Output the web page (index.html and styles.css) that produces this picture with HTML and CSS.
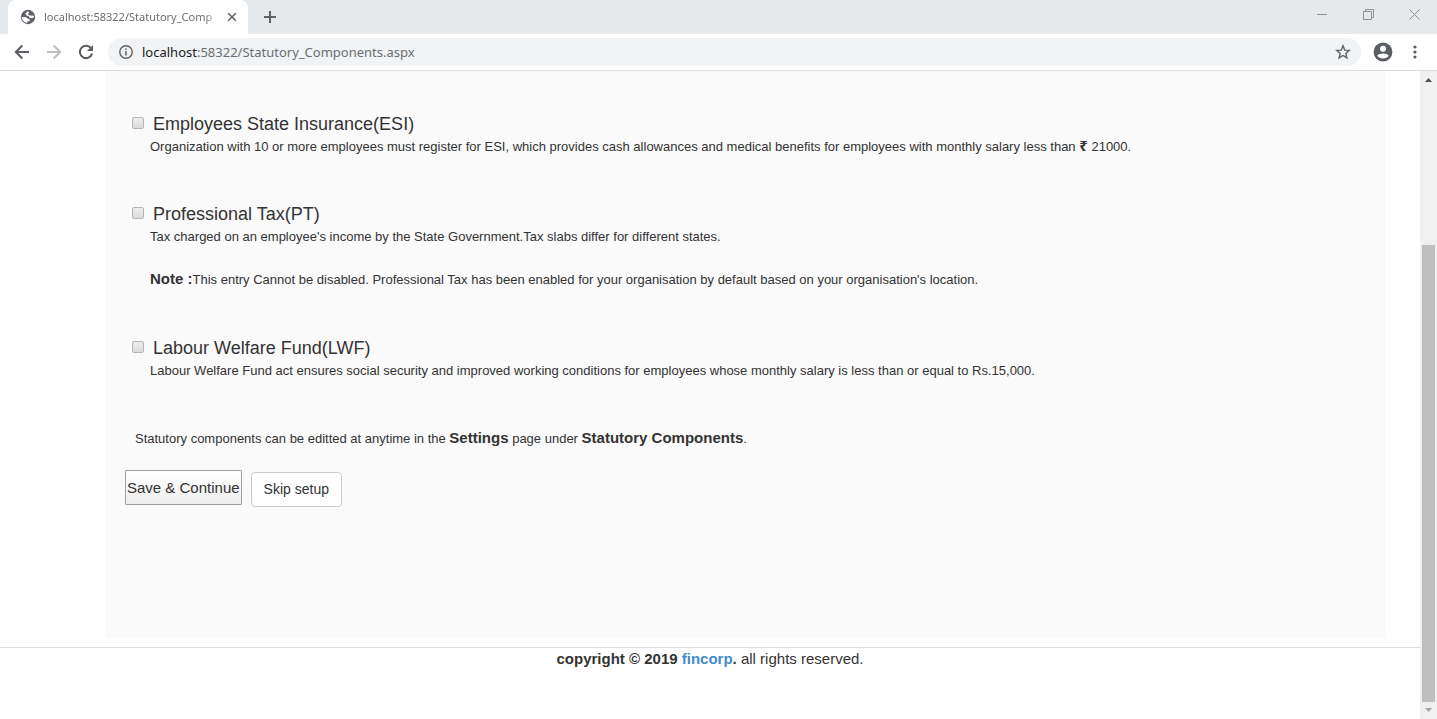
FILE: index.html
```html
<!DOCTYPE html>
<html lang="en">
<head>
<meta charset="utf-8">
<title>Statutory Components</title>
<link rel="stylesheet" href="styles.css">
</head>
<body>
<header class="browser">
  <div class="tabstrip">
    <div class="tab">
      <svg class="globe" viewBox="0 0 16 16"><circle cx="8" cy="8" r="7.2" fill="#5f6368"/><path d="M7.5 2.3 9 3.2 8 5.4 10 6.6 14 6.8 13.8 8.6 11.2 9.2 9.4 8.4 8.6 7 6.6 6.4 5.4 4.4ZM1.8 8 6.2 8.2 7.8 9.8 10 10.4 9.4 12 7.6 12.4 7 14 4 12.8 2.2 10.6Z" fill="#fff"/></svg>
      <span class="tab-title">localhost:58322/Statutory_Comp</span>
      <button class="tab-close" aria-label="Close tab"><svg viewBox="0 0 10 10"><path d="M1.2 1.2 8.8 8.8M8.8 1.2 1.2 8.8" stroke="#5f6368" stroke-width="1.6"/></svg></button>
    </div>
    <button class="new-tab" aria-label="New tab"><svg viewBox="0 0 12 12"><path d="M6 0V12M0 6H12" stroke="#5f6368" stroke-width="2"/></svg></button>
    <div class="window-controls">
      <button aria-label="Minimize"><svg viewBox="0 0 11 11"><path d="M0 5.5H10" stroke="#8f9194"/></svg></button>
      <button aria-label="Restore"><svg viewBox="0 0 11 11"><path d="M.5 2.5H8.500V10.500H.5ZM2.500 2.500V.5H10.500V8.500H8.500" fill="none" stroke="#8f9194"/></svg></button>
      <button aria-label="Close"><svg viewBox="0 0 11 11"><path d="M.5 .5 10.500 10.500M10.500 .5 .5 10.500" stroke="#8f9194"/></svg></button>
    </div>
  </div>
  <div class="toolbar">
    <button aria-label="Back"><svg viewBox="0 0 16 16"><path d="M15 8H2M8.300 1.500 1.800 8 8.300 14.500" fill="none" stroke="#5a5e63" stroke-width="2"/></svg></button>
    <button aria-label="Forward"><svg viewBox="0 0 16 16"><path d="M1 8H14M7.700 1.500 14.200 8 7.700 14.500" fill="none" stroke="#bcbec0" stroke-width="2"/></svg></button>
    <button aria-label="Reload"><svg viewBox="0 0 16 16"><path d="M13.300 4.500A6.200 6.200 0 1 0 14.100 9.500" fill="none" stroke="#5a5e63" stroke-width="2"/><path d="M15 1V7H9Z" fill="#5a5e63"/></svg></button>
    <div class="address">
      <svg class="info" viewBox="0 0 14 14"><circle cx="7" cy="7" r="6.200" fill="none" stroke="#5f6368" stroke-width="1.400"/><path d="M7 6V10.500M7 3.500V5" stroke="#5f6368" stroke-width="1.500"/></svg>
      <span class="url"><span class="host">localhost</span>:58322/Statutory_Components.aspx</span>
      <button class="star" aria-label="Bookmark"><svg viewBox="0 0 16 16"><path d="M8 1.800 9.700 6.100 14.300 6.400 10.800 9.400 11.900 13.900 8 11.500 4.100 13.900 5.200 9.400 1.700 6.400 6.300 6.100Z" fill="none" stroke="#5f6368" stroke-width="1.400"/></svg></button>
    </div>
    <button class="profile" aria-label="Profile"><svg viewBox="0 0 20 20"><circle cx="10" cy="10" r="9.400" fill="#5a5e63"/><circle cx="10" cy="6.800" r="3" fill="#fff"/><path d="M4.300 13.700C5.500 10.900 14.500 10.900 15.700 13.700 13.500 17.400 6.500 17.400 4.300 13.700Z" fill="#fff"/></svg></button>
    <button class="menu" aria-label="Menu"><svg viewBox="0 0 4 14"><g fill="#5a5e63"><circle cx="2" cy="2" r="1.600"/><circle cx="2" cy="7" r="1.600"/><circle cx="2" cy="12" r="1.600"/></g></svg></button>
  </div>
</header>
<div class="viewport">
  <div class="page">
    <main class="panel">
      <section class="component">
        <div class="heading"><input type="checkbox" id="esi"><label for="esi">Employees State Insurance(ESI)</label></div>
        <p>Organization with 10 or more employees must register for ESI, which provides cash allowances and medical benefits for employees with monthly salary less than <span class="rupee">₹</span> 21000.</p>
      </section>
      <section class="component">
        <div class="heading"><input type="checkbox" id="pt"><label for="pt">Professional Tax(PT)</label></div>
        <p>Tax charged on an employee's income by the State Government.Tax slabs differ for different states.</p>
        <p class="note"><b>Note :</b>This entry Cannot be disabled. Professional Tax has been enabled for your organisation by default based on your organisation's location.</p>
      </section>
      <section class="component">
        <div class="heading"><input type="checkbox" id="lwf"><label for="lwf">Labour Welfare Fund(LWF)</label></div>
        <p>Labour Welfare Fund act ensures social security and improved working conditions for employees whose monthly salary is less than or equal to Rs.15,000.</p>
      </section>
      <p class="hint">Statutory components can be editted at anytime in the <b>Settings</b> page under <b>Statutory Components</b>.</p>
      <div class="actions">
        <button class="save">Save &amp; Continue</button>
        <button class="skip">Skip setup</button>
      </div>
    </main>
    <footer class="footer"><b>copyright © 2019 <a href="#">fincorp</a>.</b> all rights reserved.</footer>
  </div>
  <div class="scrollbar">
    <svg viewBox="0 0 7 4"><path d="M0 4 3.500 0 7 4Z" fill="#505050"/></svg>
    <div class="track"><div class="thumb"></div></div>
    <svg viewBox="0 0 7 4"><path d="M0 0 3.500 4 7 0Z" fill="#a3a3a3"/></svg>
  </div>
</div>
</body>
</html>
```
FILE: styles.css
```css
* { box-sizing: border-box; }
html, body { height: 100%; }
body {
  margin: 0;
  display: flex;
  flex-direction: column;
  overflow: hidden;
  background: #fff;
  color: #333;
  font: 15px/20px "Liberation Sans", Arial, sans-serif;
}
button { padding: 0; border: 0; background: none; color: inherit; font: inherit; }
svg { display: block; flex: none; }
p { margin: 0; }

.browser { flex: none; border-bottom: 1px solid #dadbdd; font-family: "Noto Sans", "Open Sans", sans-serif; }
.tabstrip { display: flex; align-items: center; height: 34px; padding-left: 8px; background: #e5e9ec; }
.tab {
  display: flex;
  align-items: center;
  width: 240px;
  height: 34px;
  padding: 0 11px 0 12px;
  border-radius: 8px 8px 0 0;
  background: #fff;
}
.globe { width: 16px; height: 16px; margin-right: 8px; }
.tab-title {
  flex: 1;
  min-width: 0;
  white-space: nowrap;
  color: #6b6e72;
  font-size: 11px;
  -webkit-mask-image: linear-gradient(to right, #000 92%, transparent);
  mask-image: linear-gradient(to right, #000 92%, transparent);
}
.tab-close { margin-left: 8px; }
.tab-close svg { width: 10px; height: 10px; }
.new-tab { margin-left: 16px; }
.new-tab svg { width: 12px; height: 12px; }
.window-controls { display: flex; gap: 35px; margin: 0 17px 6px auto; }
.window-controls svg { width: 11px; height: 11px; }

.toolbar { display: flex; align-items: center; gap: 16px; height: 36px; padding: 0 20px 0 14px; }
.toolbar svg { width: 16px; height: 16px; }
.address {
  display: flex;
  flex: 1;
  align-items: center;
  height: 28px;
  margin-right: -4px;
  margin-left: -2px;
  padding: 0 10px 0 11px;
  border-radius: 14px;
  background: #f1f3f4;
}
.address .info { width: 14px; height: 14px; }
.url { flex: 1; margin-left: 9px; color: #6b6e72; font-size: 13px; }
.host { color: #202124; }
.toolbar .profile svg { width: 20px; height: 20px; }
.menu { margin-left: 4px; }
.toolbar .menu svg { width: 4px; height: 14px; }

.viewport { display: flex; flex: 1; min-height: 0; }
.page { flex: 1; min-width: 0; }
.panel { min-height: 566px; margin: 0 35px 0 105px; padding: 42px 20px 0; background: #fafafa; }
.component { padding: 0 0 46px 25px; font-size: 13px; }
.heading { display: flex; align-items: center; gap: 9px; margin: 0 0 2px -18px; font-size: 18px; line-height: 22px; }
.heading input {
  appearance: none;
  width: 12px;
  height: 12px;
  margin: 0 0 2px;
  border: 1px solid #b5b5b5;
  border-radius: 2px;
  background: linear-gradient(#ededed, #dcdcdc);
}
.component b, .hint b { font-size: 15px; }
.rupee { font: bold 15px/16px "Noto Sans", sans-serif; }
.note { margin-top: 22px; padding-bottom: 1px; }
.hint { padding: 1px 0 0 10px; font-size: 13px; }
.actions { display: flex; align-items: flex-start; gap: 9px; margin-top: 21px; }
.save {
  height: 35px;
  padding: 0 1px;
  border: 1px solid #a0a0a0;
  border-radius: 1px;
  background: linear-gradient(#fff, #efefef);
}
.skip {
  height: 35px;
  margin-top: 2px;
  padding: 0 12px 2px;
  border: 1px solid #ccc;
  border-radius: 4px;
  background: #fff;
  font-size: 14px;
}
.footer { margin-top: 10px; padding-top: 1px; border-top: 1px solid #ddd; text-align: center; }
.footer a { color: #428bca; text-decoration: none; }

.scrollbar {
  display: flex;
  flex: none;
  flex-direction: column;
  align-items: center;
  width: 17px;
  padding: 7px 2px;
  background: #f0f0f0;
}
.scrollbar svg { width: 7px; height: 4px; }
.track { display: flex; flex: 1; align-items: flex-end; width: 13px; padding: 6px 0; }
.thumb { width: 13px; height: 74.5%; background: #bfbfbf; }
```
